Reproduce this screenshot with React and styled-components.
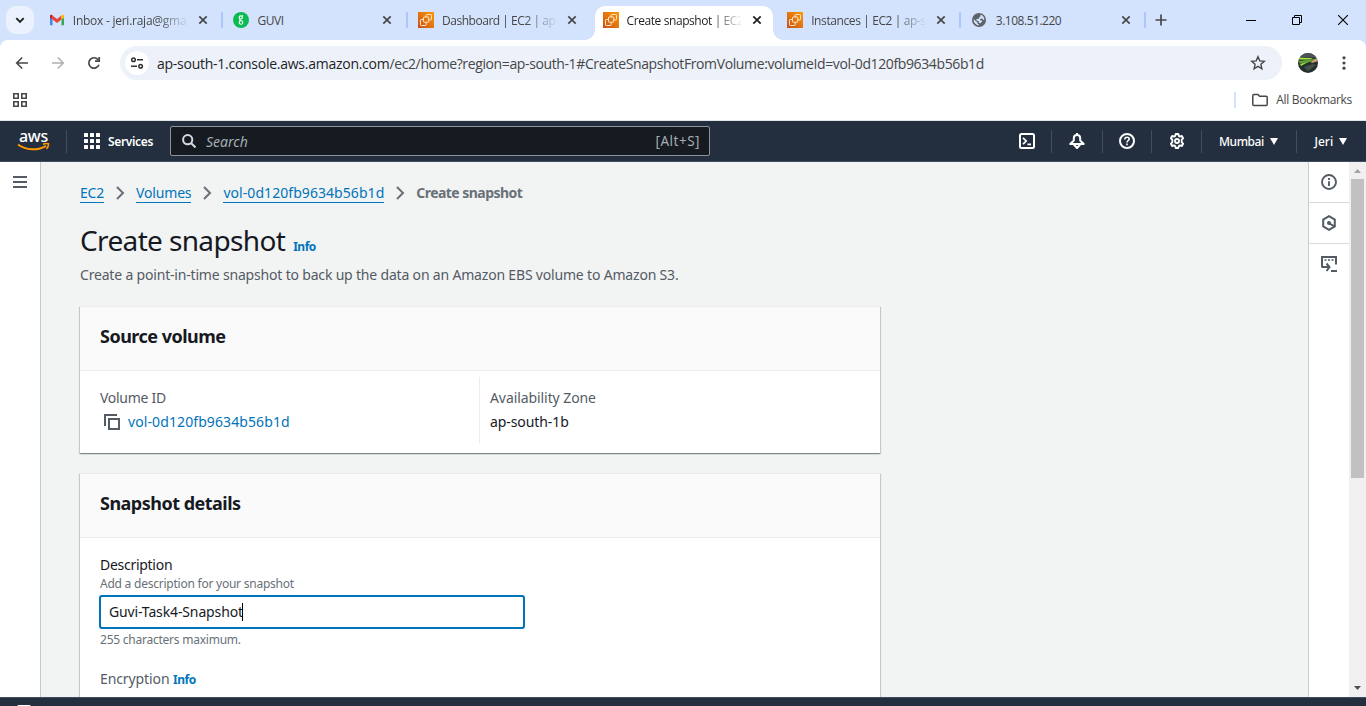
import React from 'react';
import styled, { createGlobalStyle, css } from 'styled-components';

const GlobalStyle = createGlobalStyle`
  *, *::before, *::after { box-sizing: border-box; }
  html, body { margin: 0; height: 100%; overflow: hidden; }
  body { font-family: "Noto Sans", "Open Sans", sans-serif; font-size: 14px; color: #16191f; background: #fff; }
  svg { display: block; flex: none; }
`;

const Screen = styled.div`
  width: 1366px;
  height: 706px;
  display: flex;
  flex-direction: column;
  overflow: hidden;
`;

/* ---------- Browser chrome ---------- */
const TabStrip = styled.div`
  height: 40px;
  flex: none;
  background: #d3e3fd;
  display: flex;
  align-items: flex-end;
  padding-left: 6px;
`;

const TabSearch = styled.div`
  width: 28px;
  height: 28px;
  margin: 0 6.8px 6px 0;
  border-radius: 10px;
  background: #ebf2fe;
  display: flex;
  align-items: center;
  justify-content: center;
`;

const activeTab = css`
  background: #fff;
  color: #1f1f1f;
  &::before, &::after {
    content: "";
    position: absolute;
    bottom: 0;
    width: 10px;
    height: 10px;
  }
  &::before { left: -10px; background: radial-gradient(circle at 0 0, transparent 9.5px, #fff 10px); }
  &::after { right: -10px; background: radial-gradient(circle at 100% 0, transparent 9.5px, #fff 10px); }
`;

const Tab = styled.div`
  position: relative;
  width: 178px;
  height: 34px;
  padding: 0 8px 6px;
  border-radius: 10px 10px 0 0;
  display: flex;
  align-items: center;
  gap: 8px;
  color: #474747;
  ${(p) => p.$active && activeTab}
`;

const TabTitle = styled.span`
  width: 114px;
  padding-top: 2px;
  white-space: nowrap;
  font: 12px/16px "Open Sans", sans-serif;
  letter-spacing: ${(p) => p.$track || 0}px;
  mask-image: ${(p) => (p.$fade ? 'linear-gradient(90deg, #000 84px, transparent 116px)' : 'none')};
`;

const TabGap = styled.div`
  width: 6.6px;
  height: 40px;
  display: flex;
  align-items: center;
  justify-content: center;
  &::after {
    content: "";
    width: 2px;
    height: 16px;
    border-radius: 1px;
    background: ${(p) => (p.$line ? '#a8c7fa' : 'transparent')};
  }
`;

const NewTab = styled.div`
  height: 40px;
  padding-left: 6.2px;
  display: flex;
  align-items: center;
`;

const WindowButtons = styled.div`
  margin-left: auto;
  height: 40px;
  display: flex;
  align-items: center;
`;

const WindowButton = styled.div`
  width: 46px;
  display: flex;
  justify-content: center;
`;

const ToolbarBack = styled.div`
  height: 46px;
  flex: none;
  background: #d3e3fd;
`;

const Toolbar = styled.div`
  height: 46px;
  background: #fff;
  border-radius: 8px 8px 0 0;
  display: flex;
  align-items: center;
  padding-left: 14px;
`;

const ToolButton = styled.div`
  flex: none;
  width: ${(p) => p.$w || 36}px;
  padding-left: ${(p) => p.$inset || 0}px;
`;

const Omnibox = styled.div`
  flex: none;
  width: 1162px;
  height: 34px;
  margin-left: -2px;
  border-radius: 17px;
  background: #ecf1fa;
  display: flex;
  align-items: center;
  padding: 0 16px 0 5px;
`;

const SiteChip = styled.div`
  width: 24px;
  height: 24px;
  border-radius: 50%;
  background: #fff;
  display: flex;
  align-items: center;
  justify-content: center;
`;

const Url = styled.span`
  flex: 1;
  margin-left: 8px;
  padding-top: 1px;
  font: 14px/20px "Open Sans", sans-serif;
  letter-spacing: -0.38px;
  white-space: nowrap;
  color: #474747;
  b { font-weight: 400; color: #1f1f1f; letter-spacing: -0.26px; }
`;

const Bookmarks = styled.div`
  height: 35px;
  flex: none;
  background: #fff;
  border-bottom: 1px solid #dfe6e3;
  display: flex;
  align-items: center;
  padding: 0 14px 6px 13px;
`;

const BookmarkFolder = styled.div`
  margin-left: auto;
  height: 16px;
  padding-left: 16px;
  border-left: 2px solid #d3e3fd;
  display: flex;
  align-items: center;
  gap: 8px;
  color: #474747;
  font: 12px/16px "Open Sans", sans-serif;
  letter-spacing: -0.33px;
`;

/* ---------- Console navigation ---------- */
const NavBar = styled.div`
  height: 41px;
  flex: none;
  background: #232f3e;
  border-bottom: 1px solid #414d5c;
  display: flex;
  align-items: center;
  padding-left: 17px;
  color: #fff;
`;

const AwsLogo = styled.div`
  width: 33px;
  height: 24px;
  display: flex;
  flex-direction: column;
  align-items: center;
  font-size: 16px;
  line-height: 14px;
  font-weight: 500;
  letter-spacing: -0.2px;
`;

const NavRule = styled.div`
  width: 1px;
  height: 23px;
  background: #414d5c;
  margin-left: ${(p) => p.$ml || 0}px;
`;

const NavServices = styled.div`
  width: 103px;
  padding: 0 0 0 17px;
  display: flex;
  align-items: center;
  gap: 8px;
  font-size: 12px;
  font-weight: 600;
  letter-spacing: -0.35px;
`;

const NavSearch = styled.div`
  width: 540px;
  height: 30px;
  border: 1px solid #8d9299;
  border-radius: 2px;
  background: #161b22;
  display: flex;
  align-items: center;
  padding: 0 9px 0 11px;
  color: #a5adb3;
  font-size: 14px;
`;

const SearchHint = styled.span`
  flex: 1;
  margin-left: 10px;
  font-style: italic;
`;

const SearchKey = styled.span`
  font-size: 13.5px;
  letter-spacing: 0.5px;
`;

const NavIcon = styled.div`
  width: ${(p) => p.$w}px;
  display: flex;
  justify-content: center;
`;

const NavMenu = styled.div`
  width: ${(p) => p.$w}px;
  display: flex;
  align-items: center;
  padding-left: ${(p) => p.$inset}px;
  gap: 6px;
  font-size: 12px;
  font-weight: 500;
  letter-spacing: ${(p) => p.$track}px;
`;

const NavRight = styled.div`
  margin-left: auto;
  display: flex;
  align-items: center;
`;

/* ---------- Console page ---------- */
const Workspace = styled.div`
  height: 535px;
  flex: none;
  display: flex;
  background: #f2f3f3;
`;

const LeftRail = styled.div`
  width: 41px;
  background: #fff;
  border-right: 1px solid #c4c9c9;
  padding: 14px 0 0 13px;
`;

const Page = styled.main`
  flex: 1;
  padding-left: 39px;
  overflow: hidden;
  white-space: nowrap;
`;

const Breadcrumbs = styled.nav`
  height: 20px;
  margin-top: 21px;
  display: flex;
  align-items: center;
  line-height: 20px;
  svg { margin: 0 10px; }
`;

const Crumb = styled.span`
  height: 20px;
  border-bottom: 1px solid #0073bb;
  color: #0073bb;
  letter-spacing: ${(p) => p.$track || 0}px;
`;

const CurrentCrumb = styled.span`
  color: #687078;
  font-weight: 700;
  letter-spacing: -0.55px;
`;

const TitleRow = styled.div`
  height: 36px;
  margin-top: 19px;
  display: flex;
  align-items: baseline;
  gap: 8px;
`;

const Title = styled.h1`
  margin: 0;
  font-size: 28px;
  line-height: 36px;
  font-weight: 400;
  letter-spacing: -0.64px;
`;

const Info = styled.a`
  color: #0073bb;
  font-size: 12px;
  font-weight: 700;
  letter-spacing: -0.5px;
`;

const Lead = styled.p`
  margin: 7px 0 20px;
  line-height: 20px;
  height: 21px;
  color: #545b64;
  letter-spacing: -0.183px;
`;

const Card = styled.section`
  width: 800px;
  height: ${(p) => p.$h}px;
  margin-bottom: 20px;
  background: #fff;
  border-top: 1px solid #eaeded;
  box-shadow: 0 1px 1px 0 rgba(0, 28, 36, 0.3), 1px 1px 1px 0 rgba(0, 28, 36, 0.15), -1px 1px 1px 0 rgba(0, 28, 36, 0.15);
`;

const CardHeader = styled.h2`
  margin: 0;
  height: 64px;
  padding: 0 20px 5px;
  background: #fafafa;
  border-bottom: 1px solid #eaeded;
  display: flex;
  align-items: center;
  font-size: 18px;
  font-weight: 700;
  letter-spacing: -0.51px;
`;

const Columns = styled.div`
  display: flex;
  padding: 6px 0 0 20px;
`;

const Column = styled.div`
  width: ${(p) => p.$w}px;
  height: 66px;
  padding: 11px 0 0 ${(p) => p.$inset || 0}px;
  border-left: ${(p) => (p.$rule ? '1px solid #eaeded' : '0')};
`;

const Label = styled.div`
  line-height: 20px;
  color: #545b64;
  letter-spacing: ${(p) => p.$track || 0}px;
`;

const Value = styled.div`
  margin-top: 4px;
  line-height: 20px;
  display: flex;
  align-items: center;
  gap: 8px;
  padding-left: ${(p) => (p.$link ? 4 : 0)}px;
  color: ${(p) => (p.$link ? '#0073bb' : '#16191f')};
  letter-spacing: ${(p) => (p.$link ? 0.1 : -0.08)}px;
`;

const Form = styled.div`
  padding: 17px 20px;
`;

const FieldName = styled.div`
  height: 20px;
  line-height: 20px;
  letter-spacing: ${(p) => (p.$muted ? -0.1 : -0.28)}px;
  color: ${(p) => (p.$muted ? '#545b64' : '#16191f')};
`;

const Hint = styled.div`
  height: 16px;
  font-size: 12px;
  line-height: 18px;
  color: #687078;
  letter-spacing: -0.235px;
`;

const TextInput = styled.div`
  width: 426px;
  height: 34px;
  margin: 4px 0 2px -1px;
  padding: 0 0 1px 8px;
  border: 2px solid #0073bb;
  border-radius: 3px;
  display: flex;
  align-items: center;
  letter-spacing: -0.13px;
  &::after { content: ""; width: 1px; height: 18px; margin-left: -0.5px; background: #000; }
`;

const FieldGap = styled.div`
  height: 22px;
`;

const RightRail = styled.div`
  width: 41px;
  background: #fff;
  border-left: 1px solid #c9cdcd;
`;

const RailItem = styled.div`
  height: ${(p) => (p.$last ? 40 : 41)}px;
  border-bottom: ${(p) => (p.$last ? '0' : '1px solid #d5dbdb')};
  display: flex;
  align-items: center;
  justify-content: center;
`;

const Scrollbar = styled.div`
  width: 17px;
  background: #f0f0f0;
  display: flex;
  flex-direction: column;
  align-items: center;
`;

const ScrollArrow = styled.div`
  height: ${(p) => p.$h}px;
  display: flex;
  align-items: center;
`;

const ScrollThumb = styled.div`
  width: 13px;
  height: 299px;
  margin-bottom: auto;
  background: #c1c1c1;
`;

const FooterBar = styled.footer`
  height: 9px;
  flex: none;
  background: #232f3e;
  border-top: 1px solid #414d5c;
  padding: 7px 0 0 17px;
  &::before { content: ""; display: block; width: 14px; height: 2px; border-radius: 2px 2px 0 0; background: #fff; }
`;

/* ---------- Icons ---------- */
const Close = () => (
  <svg width="16" height="16" viewBox="0 0 16 16" stroke="currentColor" strokeWidth="1.7">
    <path d="M4.3 4.3l7.4 7.4M11.7 4.3l-7.4 7.4" />
  </svg>
);

const Gmail = () => (
  <svg width="16" height="16" viewBox="0 0 16 16">
    <path d="M1 13.2h2.500V7L1 4.800z" fill="#4285f4" />
    <path d="M12.500 13.2H15V4.800L12.500 7z" fill="#34a853" />
    <path d="M3.500 3.500v4L8 10.900l4.500-3.400v-4L8 6.900z" fill="#ea4335" />
    <path d="M1 4v1.700l2.500 1.900V3.300C2.300 2.400 1 2.800 1 4z" fill="#c5221f" />
    <path d="M15 4v1.700l-2.500 1.900V3.300C13.700 2.400 15 2.800 15 4z" fill="#fbbc04" />
  </svg>
);

const Guvi = () => (
  <svg width="16" height="16" viewBox="0 0 16 16" fill="none">
    <circle cx="8" cy="8" r="8" fill="#0cba53" />
    <g stroke="#fff" strokeWidth="1.100">
      <circle cx="7.700" cy="5.500" r="1.600" />
      <path d="M9 4.200l1-.7M7 7.300c-.8 1 .2 1.100 1 1.200" />
      <circle cx="8" cy="10.500" r="1.800" />
    </g>
  </svg>
);

const Ec2 = () => (
  <svg width="16" height="16" viewBox="0 0 16 16" fill="none">
    <defs>
      <linearGradient id="ec2" x1="0" y1="1" x2="1" y2="0">
        <stop offset="0" stopColor="#c8511b" />
        <stop offset="1" stopColor="#f90" />
      </linearGradient>
    </defs>
    <path d="M0 0h16v16H0z" fill="url(#ec2)" />
    <g stroke="#ffe6cb" strokeWidth="1">
      <rect x="5.500" y="5" width="5.200" height="5.200" rx=".6" />
      <path d="M8 5V3.200q0-.7.7-.7h4.100q.7 0 .7.7v4q0 .7-.7.7h-2M5.500 7.500H3.200q-.7 0-.7.7v4.600q0 .7.7.7h4.300q.7 0 .7-.7v-2.500" />
    </g>
  </svg>
);

const Globe = () => (
  <svg width="16" height="16" viewBox="0 0 16 16">
    <circle cx="7" cy="8" r="7" fill="#5f6368" />
    <path d="M1.700 7.200l3.800 3.300v1.200l1.300.6v1C4 13.100 1.500 10.800 1.700 7.200zM8.300 2.600c2.600.7 4.200 3 4 5.400l-1 .1-1-1.700-2.300.6.200 1.300 1.900.4.100 1.300-1.400.3v1.300L7 10.700l-.4-1.600-2-.4-.1-1.600 2.600-.3.200-1.800 1.500-.8z" fill="#d3e3fd" />
  </svg>
);

const favicons = { gmail: Gmail, guvi: Guvi, ec2: Ec2, globe: Globe };

const TABS = [
  { icon: 'gmail', title: 'Inbox - jeri.raja@gma', fade: true, line: true, track: -0.25 },
  { icon: 'guvi', title: 'GUVI', line: true, track: -0.4 },
  { icon: 'ec2', title: 'Dashboard | EC2 | ap-', fade: true, track: -0.47 },
  { icon: 'ec2', title: 'Create snapshot | EC2', fade: true, active: true, track: -0.42 },
  { icon: 'ec2', title: 'Instances | EC2 | ap-s', fade: true, line: true, track: -0.4 },
  { icon: 'globe', title: '3.108.51.220', line: true, track: -0.48 },
];

const Chevron = () => (
  <svg width="12" height="14" viewBox="0 0 12 14" fill="none" stroke="#687078" strokeWidth="2">
    <path d="M3 1l6 6-6 6" />
  </svg>
);

const Caret = () => (
  <svg width="8" height="7" viewBox="0 0 8 7"><path d="M0 0h8L4 7z" fill="#fff" /></svg>
);

function BrowserChrome() {
  return (
    <>
      <TabStrip>
        <TabSearch>
          <svg width="10" height="7" viewBox="0 0 10 7" fill="none" stroke="#1f1f1f" strokeWidth="1.900"><path d="M1.300 1.200L5 4.900l3.700-3.700" /></svg>
        </TabSearch>
        {TABS.map((t, i) => {
          const Icon = favicons[t.icon];
          return (
            <React.Fragment key={i}>
              <Tab $active={t.active}>
                <Icon />
                <TabTitle $fade={t.fade} $track={t.track}>{t.title}</TabTitle>
                <Close />
              </Tab>
              <TabGap $line={t.line} />
            </React.Fragment>
          );
        })}
        <NewTab>
          <svg width="12" height="12" viewBox="0 0 12 12" stroke="#474747" strokeWidth="1.700"><path d="M6 .5v11M.5 6h11" /></svg>
        </NewTab>
        <WindowButtons>
          <WindowButton><svg width="10" height="10" viewBox="0 0 10 10" stroke="#000"><path d="M0 5.500h10" /></svg></WindowButton>
          <WindowButton><svg width="10" height="10" viewBox="0 0 10 10" fill="none" stroke="#000"><path d="M.5 2.500h7v7h-7zM2.500 2.500v-2h7v7h-2" /></svg></WindowButton>
          <WindowButton><svg width="10" height="10" viewBox="0 0 10 10" stroke="#000" strokeWidth="1.100"><path d="M0 0l10 10M10 0L0 10" /></svg></WindowButton>
        </WindowButtons>
      </TabStrip>
      <ToolbarBack>
        <Toolbar>
          <ToolButton>
            <svg width="16" height="16" viewBox="0 0 16 16" fill="none" stroke="#474747" strokeWidth="1.600"><path d="M14 8H3M8.200 2.500L2.700 8l5.500 5.500" /></svg>
          </ToolButton>
          <ToolButton>
            <svg width="16" height="16" viewBox="0 0 16 16" fill="none" stroke="#b0b0b0" strokeWidth="1.500"><path d="M2 8h11M7.800 2.500L13.300 8l-5.500 5.500" /></svg>
          </ToolButton>
          <ToolButton>
            <svg width="16" height="16" viewBox="0 0 16 16" fill="none" stroke="#474747" strokeWidth="1.700"><path d="M12.900 9.800A5.200 5.200 0 1 1 12 4.600M13.200 2v4.200H9" /></svg>
          </ToolButton>
          <Omnibox>
            <SiteChip>
              <svg width="14" height="14" viewBox="0 0 14 14" fill="none" stroke="#303134" strokeWidth="1.500">
                <circle cx="3.500" cy="3.700" r="1.800" /><path d="M7 3.700h6M1 10.300h6" /><circle cx="10.600" cy="10.300" r="1.800" />
              </svg>
            </SiteChip>
            <Url><b>ap-south-1.console.aws.amazon.com</b>/ec2/home?region=ap-south-1#CreateSnapshotFromVolume:volumeId=vol-0d120fb9634b56b1d</Url>
            <svg width="16" height="16" viewBox="0 0 16 16" fill="none" stroke="#474747" strokeWidth="1.400"><path d="M8 1.700l1.800 4.200 4.500.4-3.400 3 1 4.500L8 11.400l-3.900 2.400 1-4.500-3.400-3 4.500-.4z" /></svg>
          </Omnibox>
          <ToolButton $w={54} $inset={16}>
            <svg width="20" height="20" viewBox="0 0 20 20">
              <defs><clipPath id="avatar"><circle cx="10" cy="10" r="10" /></clipPath></defs>
              <g clipPath="url(#avatar)">
                <path d="M0 0h20v20H0z" fill="#26302c" />
                <path d="M0 0h20v5L0 4z" fill="#4a5157" />
                <path d="M0 4.500l15 .8-3 1.200H0z" fill="#a6ec40" />
                <path d="M0 8l16-2 3-.5-4 3-13 2z" fill="#5f9c36" />
                <path d="M2 11l9-2.500-8 4.500z" fill="#8fe23b" />
                <path d="M13 9l6-4 1 3-6 2z" fill="#d39b7a" />
                <path d="M6 14l9-3 3 1-8 6z" fill="#45504d" />
              </g>
            </svg>
          </ToolButton>
          <ToolButton $w={12} $inset={6}>
            <svg width="4" height="16" viewBox="0 0 4 16" fill="#474747"><circle cx="2" cy="2.800" r="1.600" /><circle cx="2" cy="8" r="1.600" /><circle cx="2" cy="13.200" r="1.600" /></svg>
          </ToolButton>
        </Toolbar>
      </ToolbarBack>
      <Bookmarks>
        <svg width="14" height="14" viewBox="0 0 14 14" fill="none" stroke="#474747" strokeWidth="1.600"><path d="M.8.8h4.400v4.400H.8zM8.800.8h4.400v4.400H8.800zM.8 8.800h4.400v4.400H.8zM8.800 8.800h4.400v4.400H8.800z" /></svg>
        <BookmarkFolder>
          <svg width="16" height="14" viewBox="0 0 16 14" fill="none" stroke="#474747" strokeWidth="1.500"><path d="M.8 11.500v-9q0-1 1-1H6l1.600 1.700h6.600q1 0 1 1v7.300q0 1-1 1H1.800q-1 0-1-1z" /></svg>
          All Bookmarks
        </BookmarkFolder>
      </Bookmarks>
    </>
  );
}

function ConsoleNav() {
  return (
    <NavBar>
      <AwsLogo>
        <span>aws</span>
        <svg width="33" height="9" viewBox="0 0 33 9" fill="none" stroke="#f90">
          <path d="M1 1.500c8 6 20 6.300 28 1.300" strokeWidth="2" />
          <path d="M26 1.200c2-.9 4-1 5.500-.5.100 1.900-.5 3.800-2 5.400" strokeWidth="1.500" />
        </svg>
      </AwsLogo>
      <NavRule $ml={16} />
      <NavServices>
        <svg width="16" height="16" viewBox="0 0 16 16" fill="#fff">
          {[0, 6, 12].map((y) => [0, 6, 12].map((x) => <rect key={`${x}-${y}`} x={x} y={y} width="4" height="4" rx=".5" />))}
        </svg>
        Services
      </NavServices>
      <NavSearch>
        <svg width="14" height="14" viewBox="0 0 14 14" fill="none" stroke="#d5dbdb" strokeWidth="2"><circle cx="5.700" cy="5.700" r="4.600" /><path d="M9 9l4.500 4.500" /></svg>
        <SearchHint>Search</SearchHint>
        <SearchKey>[Alt+S]</SearchKey>
      </NavSearch>
      <NavRight>
        <NavIcon $w={49}>
          <svg width="16" height="16" viewBox="0 0 16 16" fill="none" stroke="#fff" strokeWidth="2"><rect x="1" y="1" width="14" height="14" rx="1.500" /><path d="M4 4.800L7.200 8 4 11.200M8.500 11.300H12" strokeWidth="1.700" /></svg>
        </NavIcon>
        <NavRule />
        <NavIcon $w={50}>
          <svg width="16" height="16" viewBox="0 0 16 16" fill="none" stroke="#fff" strokeWidth="2" strokeLinejoin="round"><path d="M8 0v2M1.300 11h13.400L11.200 7.500V5.300C11.200 3.300 9.900 2 8 2S4.800 3.300 4.800 5.300v2.200zM4.800 11.500L8 15l3.200-3.500" /></svg>
        </NavIcon>
        <NavRule />
        <NavIcon $w={48}>
          <svg width="16" height="16" viewBox="0 0 16 16" fill="none" stroke="#fff" strokeWidth="2"><circle cx="8" cy="8" r="7" /><path d="M5.800 6.400C5.800 4.900 6.700 4.200 8 4.200s2.200.8 2.200 1.900C10.200 7.600 8 7.700 8 9.400M8 10.500v1.700" strokeWidth="1.600" /></svg>
        </NavIcon>
        <NavRule />
        <NavIcon $w={49}>
          <svg width="16" height="16" viewBox="0 0 16 16" fill="none" stroke="#fff" strokeWidth="1.900"><path d="M6.700 1h2.600l.5 1.900 1.100.7 1.900-.6 1.300 2.300L12.700 6.700v2.600l1.400 1.400-1.300 2.300-1.900-.6-1.100.7-.5 1.900H6.700l-.5-1.900-1.100-.7-1.900.6-1.300-2.300 1.400-1.400V6.700L1.900 5.300 3.200 3l1.900.6 1.100-.7z" strokeLinejoin="round" /><circle cx="8" cy="8" r="2" /></svg>
        </NavIcon>
        <NavRule />
        <NavMenu $w={94} $inset={17} $track={-0.45}>Mumbai <Caret /></NavMenu>
        <NavRule />
        <NavMenu $w={69} $inset={17.5} $track={0}>Jeri <Caret /></NavMenu>
      </NavRight>
    </NavBar>
  );
}

export default function App() {
  return (
    <Screen>
      <GlobalStyle />
      <BrowserChrome />
      <ConsoleNav />
      <Workspace>
        <LeftRail>
          <svg width="14" height="12" viewBox="0 0 14 12" fill="#545b64"><path d="M0 0h14v2H0zM0 5h14v2H0zM0 10h14v2H0z" /></svg>
        </LeftRail>
        <Page>
          <Breadcrumbs>
            <Crumb $track={-0.2}>EC2</Crumb><Chevron />
            <Crumb $track={-0.17}>Volumes</Crumb><Chevron />
            <Crumb $track={0.06}>vol-0d120fb9634b56b1d</Crumb><Chevron />
            <CurrentCrumb>Create snapshot</CurrentCrumb>
          </Breadcrumbs>
          <TitleRow>
            <Title>Create snapshot</Title>
            <Info>Info</Info>
          </TitleRow>
          <Lead>Create a point-in-time snapshot to back up the data on an Amazon EBS volume to Amazon S3.</Lead>
          <Card $h={147}>
            <CardHeader>Source volume</CardHeader>
            <Columns>
              <Column $w={379}>
                <Label $track={-0.28}>Volume ID</Label>
                <Value $link>
                  <svg width="16" height="16" viewBox="0 0 16 16" fill="none" stroke="#545b64" strokeWidth="2"><path d="M5 5h10v10H5zM1 12V1h12" /></svg>
                  vol-0d120fb9634b56b1d
                </Value>
              </Column>
              <Column $w={400} $rule $inset={10}>
                <Label $track={-0.08}>Availability Zone</Label>
                <Value>ap-south-1b</Value>
              </Column>
            </Columns>
          </Card>
          <Card $h={400}>
            <CardHeader>Snapshot details</CardHeader>
            <Form>
              <FieldName>Description</FieldName>
              <Hint>Add a description for your snapshot</Hint>
              <TextInput>Guvi-Task4-Snapshot</TextInput>
              <Hint>255 characters maximum.</Hint>
              <FieldGap />
              <FieldName $muted>Encryption <Info>Info</Info></FieldName>
            </Form>
          </Card>
        </Page>
        <RightRail>
          <RailItem>
            <svg width="16" height="16" viewBox="0 0 16 16" fill="none" stroke="#545b64" strokeWidth="1.900"><circle cx="8" cy="8" r="7" /><path d="M8 4v2M8 7.200V12" /></svg>
          </RailItem>
          <RailItem>
            <svg width="16" height="16" viewBox="0 0 16 16" fill="none" stroke="#545b64" strokeWidth="2"><path d="M8 1.200l5.800 3.400v6.800L8 14.800l-5.800-3.400V4.600z" /><path d="M8.500 8.500l5 2.800" /><circle cx="8" cy="8" r="2" fill="#545b64" stroke="none" /></svg>
          </RailItem>
          <RailItem $last>
            <svg width="16" height="16" viewBox="0 0 16 16" fill="none" stroke="#545b64" strokeWidth="2"><path d="M1 11.500V1h14v7.500M1 11h6M5.500 7.500L8.500 11l-3 4M10 15h6" /><path d="M3.500 4h2M7 4h2M10.500 4h2" strokeWidth="1.500" /></svg>
          </RailItem>
        </RightRail>
        <Scrollbar>
          <ScrollArrow $h={17}><svg width="7" height="4" viewBox="0 0 7 4"><path d="M0 4h7L3.500 0z" fill="#a3a3a3" /></svg></ScrollArrow>
          <ScrollThumb />
          <ScrollArrow $h={18}><svg width="7" height="4" viewBox="0 0 7 4"><path d="M0 0h7L3.500 4z" fill="#505050" /></svg></ScrollArrow>
        </Scrollbar>
      </Workspace>
      <FooterBar />
    </Screen>
  );
}
